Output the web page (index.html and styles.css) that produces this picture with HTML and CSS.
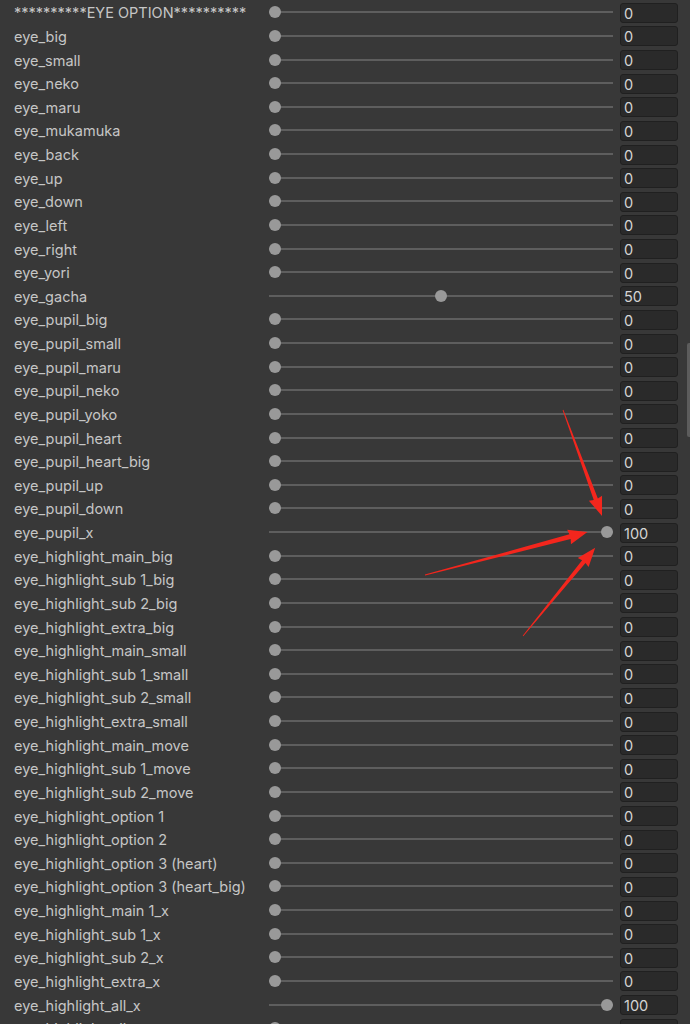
FILE: index.html
```html
<!DOCTYPE html>
<html lang="en">
<head>
  <meta charset="UTF-8">
  <meta name="viewport" content="width=device-width, initial-scale=1.0">
  <title>Blend Shapes</title>
  <link rel="stylesheet" href="styles.css">
</head>
<body>
  <div class="inspector">
    <div class="shape-list" id="shapeList"></div>
    <div class="scrollbar">
      <div class="scroll-thumb"></div>
    </div>
  </div>

  <!-- annotation arrows drawn over the panel -->
  <svg class="arrows" width="690" height="1024" viewBox="0 0 690 1024">
    <g transform="translate(563 410) rotate(69.8)">
      <polygon points="0,-0.4 95,-2.2 94,-7 113,0 94,7 95,2.2 0,0.4" />
    </g>
    <g transform="translate(425 575) rotate(-14.8)">
      <polygon points="0,-0.4 150,-2.4 149,-7.5 168,0 149,7.5 150,2.4 0,0.4" />
    </g>
    <g transform="translate(523 636) rotate(-50.7)">
      <polygon points="0,-0.4 96,-2.2 95,-7 114,0 95,7 96,2.2 0,0.4" />
    </g>
  </svg>

  <script>
    const shapes = [
      ["**********EYE OPTION**********", 0],
      ["eye_big", 0],
      ["eye_small", 0],
      ["eye_neko", 0],
      ["eye_maru", 0],
      ["eye_mukamuka", 0],
      ["eye_back", 0],
      ["eye_up", 0],
      ["eye_down", 0],
      ["eye_left", 0],
      ["eye_right", 0],
      ["eye_yori", 0],
      ["eye_gacha", 50],
      ["eye_pupil_big", 0],
      ["eye_pupil_small", 0],
      ["eye_pupil_maru", 0],
      ["eye_pupil_neko", 0],
      ["eye_pupil_yoko", 0],
      ["eye_pupil_heart", 0],
      ["eye_pupil_heart_big", 0],
      ["eye_pupil_up", 0],
      ["eye_pupil_down", 0],
      ["eye_pupil_x", 100],
      ["eye_highlight_main_big", 0],
      ["eye_highlight_sub 1_big", 0],
      ["eye_highlight_sub 2_big", 0],
      ["eye_highlight_extra_big", 0],
      ["eye_highlight_main_small", 0],
      ["eye_highlight_sub 1_small", 0],
      ["eye_highlight_sub 2_small", 0],
      ["eye_highlight_extra_small", 0],
      ["eye_highlight_main_move", 0],
      ["eye_highlight_sub 1_move", 0],
      ["eye_highlight_sub 2_move", 0],
      ["eye_highlight_option 1", 0],
      ["eye_highlight_option 2", 0],
      ["eye_highlight_option 3 (heart)", 0],
      ["eye_highlight_option 3 (heart_big)", 0],
      ["eye_highlight_main 1_x", 0],
      ["eye_highlight_sub 1_x", 0],
      ["eye_highlight_sub 2_x", 0],
      ["eye_highlight_extra_x", 0],
      ["eye_highlight_all_x", 100],
      ["eye_highlight_all_y", 0]
    ];

    const list = document.getElementById("shapeList");
    shapes.forEach(function (item) {
      const row = document.createElement("div");
      row.classList.add("shape-row");
      row.innerHTML = `
        <span class="shape-name">${item[0]}</span>
        <div class="slider">
          <div class="track"></div>
          <div class="knob" style="left: calc((100% - 12px) * ${item[1] / 100})"></div>
        </div>
        <div class="value-field">${item[1]}</div>
      `;
      list.appendChild(row);
    });
  </script>
</body>
</html>
```

FILE: styles.css
```css
body {
  margin: 0;
  padding: 0;
  background-color: #383838;
  font-family: Inter, "Noto Sans", sans-serif;
  color: #c6c6c6;
  overflow: hidden;
}

.inspector {
  display: flex;
  height: 1024px;
}

.shape-list {
  width: 678px;
  display: flex;
  flex-direction: column;
  padding-top: 1px;
}

.shape-row {
  display: grid;
  grid-template-columns: 269px 344px 65px;
  align-items: center;
  height: 23.64px;
  flex-shrink: 0;
}

.shape-name {
  padding-left: 14px;
  font-size: 14.5px;
  white-space: nowrap;
  overflow: hidden;
}

.slider {
  position: relative;
  height: 12px;
  margin-top: -1px;
}

.track {
  margin-top: 5px;
  height: 2px;
  background-color: #5e5e5e;
}

.knob {
  position: absolute;
  top: 0;
  width: 12px;
  height: 12px;
  border-radius: 50%;
  background-color: #999999;
}

.value-field {
  box-sizing: border-box;
  height: 20px;
  margin-left: 7px;
  padding: 1px 3px 0;
  background-color: #2a2a2a;
  border: 1px solid #202020;
  border-radius: 3px;
  font-size: 14.5px;
  line-height: 17px;
  color: #d4d4d4;
}

.scrollbar {
  flex: 1;
  display: flex;
  justify-content: flex-end;
}

.scroll-thumb {
  width: 3px;
  height: 94px;
  margin-top: 343px;
  border-radius: 2px 0 0 2px;
  background-color: #5c5c5c;
}

.arrows {
  position: absolute;
  top: 0;
  left: 0;
  pointer-events: none;
}

.arrows polygon {
  fill: #f3261d;
}
```
